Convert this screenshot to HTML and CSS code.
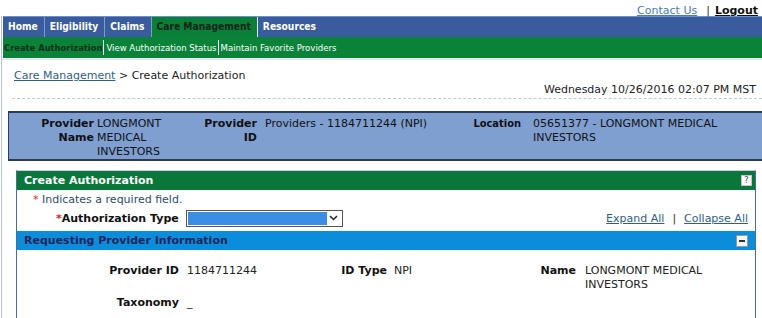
FILE: index.html
```html
<!DOCTYPE html>
<html>
<head>
<meta charset="utf-8">
<link rel="stylesheet" href="styles.css">
</head>
<body>
<div class="top-links"><a href="#" class="contact">Contact Us</a><span class="pipe">|</span><a href="#" class="logout">Logout</a></div>
<div class="frame">
  <nav class="main-nav">
    <a href="#" class="nav-item">Home</a>
    <a href="#" class="nav-item">Eligibility</a>
    <a href="#" class="nav-item">Claims</a>
    <a href="#" class="nav-item active">Care Management</a>
    <a href="#" class="nav-item last">Resources</a>
  </nav>
  <nav class="sub-nav">
    <a href="#" class="sub-item current">Create Authorization</a>
    <a href="#" class="sub-item">View Authorization Status</a>
    <a href="#" class="sub-item">Maintain Favorite Providers</a>
  </nav>
  <div class="content">
    <div class="crumbs"><a href="#">Care Management</a> &gt; Create Authorization</div>
    <div class="date">Wednesday 10/26/2016 02:07 PM MST</div>
    <div class="provider-box">
      <div class="pb-label">Provider Name</div>
      <div class="pb-value">LONGMONT MEDICAL INVESTORS</div>
      <div class="pb-label">Provider ID</div>
      <div class="pb-value pb-v2">Providers - 1184711244 (NPI)</div>
      <div class="pb-label pb-l3">Location</div>
      <div class="pb-value pb-v3">05651377 - LONGMONT MEDICAL INVESTORS</div>
    </div>
    <div class="panel">
      <div class="panel-head"><span>Create Authorization</span><span class="help">?</span></div>
      <div class="req"><span class="star">*</span> Indicates a required field.</div>
      <div class="type-row">
        <label class="type-label"><span class="star">*</span>Authorization Type</label>
        <div class="select"><div class="select-fill"></div><div class="select-btn"><svg width="9" height="6" viewBox="0 0 9 6"><path d="M1 1 L4.5 4.5 L8 1" fill="none" stroke="#222" stroke-width="1.5"/></svg></div></div>
        <div class="expand"><a href="#">Expand All</a><span class="bar">|</span><a href="#">Collapse All</a></div>
      </div>
      <div class="section-head"><span>Requesting Provider Information</span><span class="minus"><i></i></span></div>
      <div class="info-grid">
        <div class="ig-label">Provider ID</div>
        <div class="ig-value">1184711244</div>
        <div class="ig-label">ID Type</div>
        <div class="ig-value">NPI</div>
        <div class="ig-label">Name</div>
        <div class="ig-value">LONGMONT MEDICAL INVESTORS</div>
        <div class="ig-label tax">Taxonomy</div>
        <div class="ig-value tax">_</div>
      </div>
    </div>
  </div>
</div>
</body>
</html>
```
FILE: styles.css
```css
* { box-sizing: border-box; }
body {
  margin: 0;
  font-family: "DejaVu Sans", Verdana, sans-serif;
  font-size: 11px;
  color: #222;
  background: #fff;
  overflow: hidden;
}
a { color: #2e5e8e; }
.top-links {
  height: 16px;
  display: flex;
  justify-content: flex-end;
  align-items: center;
  padding-right: 4px;
  font-size: 11px;
  line-height: 13px;
  padding-top: 4px;
}
.top-links .contact { color: #4a7cb8; }
.top-links .pipe { margin: 0 5px 0 9px; color: #333; }
.top-links .logout { color: #111; font-weight: bold; }
.frame {
  margin-left: 1px;
  border-left: 1px solid #b9c2d3;
  height: 302px;
}
.main-nav {
  display: flex;
  height: 21px;
  background: #385c9d;
  border-top: 1px solid #6f8fc6;
  margin-left: 1px;
}
.nav-item {
  color: #fff;
  font-family: "DejaVu Sans Condensed", "DejaVu Sans", sans-serif;
  font-stretch: condensed;
  font-weight: bold;
  text-decoration: none;
  font-size: 10.2px;
  line-height: 20px;
  padding: 0 6px 0 5px;
  border-right: 1px solid #7f9bcc;
}
.nav-item.active {
  background: #0a7f38;
  color: #10261a;
  border-right-color: #dfe8f0;
}
.nav-item.last { border-right: none; }
.sub-nav {
  display: flex;
  align-items: center;
  height: 21px;
  background: #0a8238;
  margin-left: 1px;
  padding-left: 1px;
}
.sub-item {
  color: #fff;
  text-decoration: none;
  line-height: 15px;
  padding: 0 1px 0 2px;
  border-left: 1px solid #fff;
  font-family: "DejaVu Sans Condensed", "DejaVu Sans", sans-serif;
  font-stretch: condensed;
  font-size: 9.5px;
}
.sub-item.current {
  color: #10301c;
  font-weight: bold;
  border-left: none;
  padding-left: 0;
  font-size: 9.3px;
}
.content {
  border-top: 1px solid #cfeee0;
  margin-top: 1px;
}
.crumbs {
  padding: 9px 0 0 12px;
  line-height: 14px;
  color: #222;
}
.crumbs a { color: #2e5e8e; }
.date {
  text-align: right;
  padding: 0 6px 1px 0;
  line-height: 14px;
  border-bottom: 1px dashed #c9c9c9;
  margin-left: 10px;
}
.provider-box {
  margin: 12px 0 0 6px;
  background: #7f9fd1;
  border-top: 2px solid #2a3c5e;
  border-bottom: 2px solid #2a3c5e;
  border-left: 1px solid #2a3c5e;
  height: 50px;
  display: grid;
  grid-template-columns: 85px 107px 56px 207px 57px 220px;
  padding-top: 4px;
  line-height: 14px;
}
.pb-label {
  text-align: right;
  font-weight: bold;
  color: #111;
}
.pb-value { color: #111; padding-left: 3px; }
.pb-v2 { padding-left: 8px; white-space: nowrap; }
.pb-l3 { font-stretch: condensed; font-family: "DejaVu Sans Condensed", "DejaVu Sans", sans-serif; }
.pb-v3 { padding-left: 12px; }
.panel {
  margin: 9px 6px 0 14px;
  border: 1px solid #4b6f92;
  border-bottom: none;
  height: 160px;
  border-top-color: #c3d2de;
}
.panel-head {
  display: flex;
  justify-content: space-between;
  align-items: center;
  background: #0a763a;
  color: #fff;
  font-weight: bold;
  height: 19px;
  padding: 0 3px 0 7px;
}
.help {
  width: 11px;
  height: 11px;
  background: #fff;
  color: #555;
  font-size: 9px;
  line-height: 9px;
  text-align: center;
  font-weight: normal;
  border: 1px solid #c4c4c4;
}
.req {
  padding: 3px 0 0 16px;
  line-height: 14px;
  color: #2b4e6c;
}
.star { color: #e0262a; }
.type-row {
  display: flex;
  align-items: center;
  height: 22px;
}
.type-label {
  font-weight: bold;
  color: #111;
  margin-left: 39px;
}
.select {
  margin-left: 7px;
  width: 157px;
  height: 17px;
  border: 1px solid #555;
  display: flex;
  padding: 1px;
  background: #fff;
}
.select-fill { flex: 1; background: #3b8ee6; }
.select-btn {
  width: 14px;
  display: flex;
  align-items: center;
  justify-content: center;
}
.expand {
  margin-left: auto;
  margin-right: 7px;
  color: #333;
}
.expand a { color: #2e5e8e; }
.expand .bar { margin: 0 8px; }
.section-head {
  display: flex;
  justify-content: space-between;
  align-items: center;
  background: #0b8ddc;
  color: #16265a;
  font-weight: bold;
  height: 19px;
  margin-top: 2px;
  padding: 0 7px 0 7px;
}
.minus {
  width: 12px;
  height: 12px;
  background: #f4f6f8;
  border: 1px solid #999;
  display: flex;
  align-items: center;
  justify-content: center;
}
.minus i { display: block; width: 6px; height: 2px; background: #333; }
.info-grid {
  display: grid;
  grid-template-columns: 162px 142px 66px 134px 55px 150px;
  row-gap: 4px;
  padding-top: 14px;
  line-height: 14px;
}
.ig-label { text-align: right; font-weight: bold; color: #111; }
.ig-value { color: #222; }
.ig-value:nth-child(2) { padding-left: 8px; }
.ig-value:nth-child(4) { padding-left: 7px; }
.ig-value:nth-child(6) { padding-left: 9px; }
.ig-label.tax { grid-column: 1; }
.ig-value.tax { grid-column: 2; padding-left: 8px; }
```
